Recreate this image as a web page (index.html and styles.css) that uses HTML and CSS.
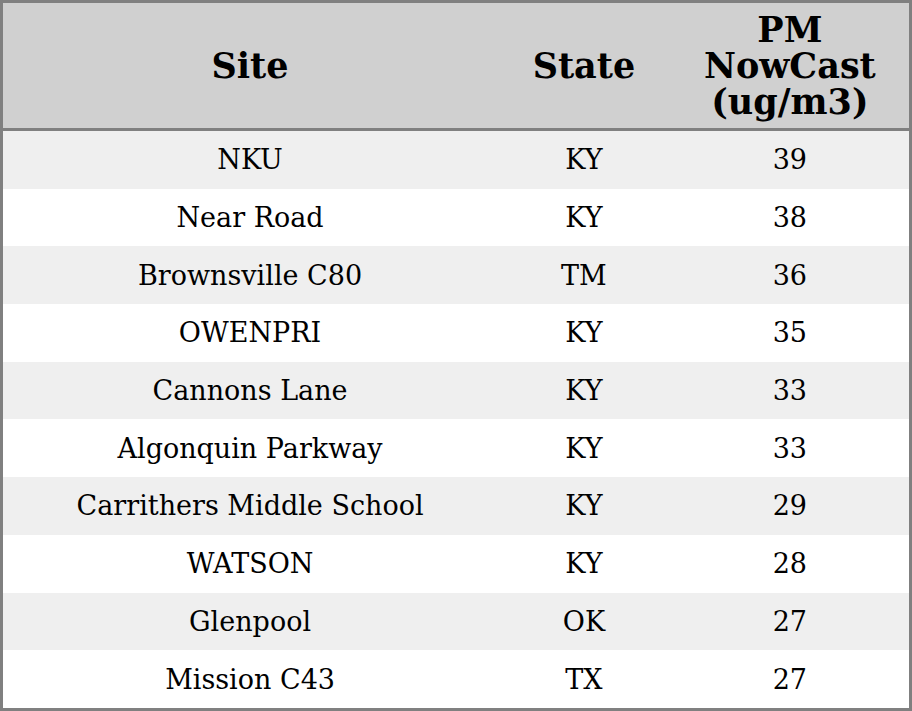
FILE: index.html
```html
<!DOCTYPE html>
<html>
<head>
<meta charset="utf-8">
<link rel="stylesheet" href="styles.css">
</head>
<body>
<table class="aq">
  <colgroup>
    <col class="c-site">
    <col class="c-state">
    <col class="c-pm">
  </colgroup>
  <thead>
    <tr><th>Site</th><th>State</th><th>PM NowCast (ug/m3)</th></tr>
  </thead>
  <tbody>
    <tr><td>NKU</td><td>KY</td><td>39</td></tr>
    <tr><td>Near Road</td><td>KY</td><td>38</td></tr>
    <tr><td>Brownsville C80</td><td>TM</td><td>36</td></tr>
    <tr><td>OWENPRI</td><td>KY</td><td>35</td></tr>
    <tr><td>Cannons Lane</td><td>KY</td><td>33</td></tr>
    <tr><td>Algonquin Parkway</td><td>KY</td><td>33</td></tr>
    <tr><td>Carrithers Middle School</td><td>KY</td><td>29</td></tr>
    <tr><td>WATSON</td><td>KY</td><td>28</td></tr>
    <tr><td>Glenpool</td><td>OK</td><td>27</td></tr>
    <tr><td>Mission C43</td><td>TX</td><td>27</td></tr>
  </tbody>
</table>
</body>
</html>
```
FILE: styles.css
```css
html, body {
  margin: 0;
  padding: 0;
  background: #fff;
}
.aq {
  width: 912px;
  height: 711px;
  border-collapse: collapse;
  border: 3px solid #808080;
  font-family: "DejaVu Serif", serif;
  color: #000;
  table-layout: fixed;
}
.c-site { width: 494px; }
.c-state { width: 173px; }
.c-pm { width: 239px; }
.aq th {
  background: #d0d0d0;
  font-size: 35px;
  font-weight: bold;
  line-height: 36px;
  height: 125px;
  padding: 0 20px;
  text-align: center;
  border-bottom: 3px solid #808080;
}
.aq td {
  font-size: 27px;
  text-align: center;
  height: 57px;
  padding: 0;
}
.aq tbody tr:nth-child(odd) td {
  background: #efefef;
}
```
